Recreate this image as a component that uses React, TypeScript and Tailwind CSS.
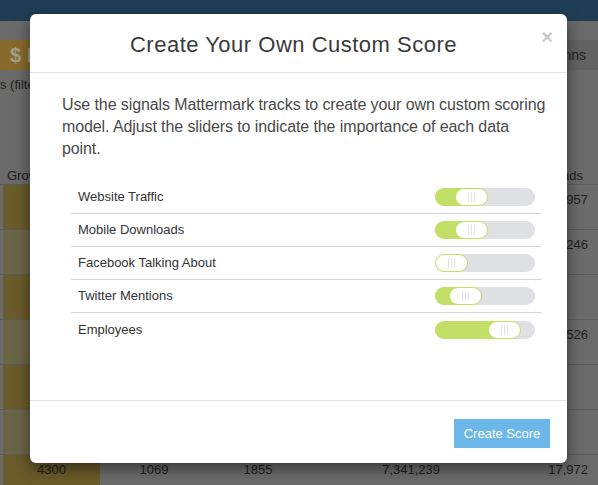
import React from 'react';

const SIGNALS = [
  { label: 'Website Traffic', pos: 20 },
  { label: 'Mobile Downloads', pos: 20 },
  { label: 'Facebook Talking About', pos: 0 },
  { label: 'Twitter Mentions', pos: 14 },
  { label: 'Employees', pos: 53 },
];

// background table rows (dimmed by the modal backdrop)
const ROWS = [
  { dark: true, right: '1,957' },
  { dark: false, right: '3,246' },
  { dark: true, right: '' },
  { dark: false, right: '1,526' },
  { dark: true, right: '' },
  { dark: false, right: '' },
];

function Slider({ pos }: { pos: number }) {
  return (
    <div className="relative w-[100px] h-[18px] rounded-full bg-[#dfe0e4]">
      {pos > 0 && (
        <div className="absolute left-0 top-0 h-full rounded-full bg-[#c2df67]" style={{ width: pos + 17 }} />
      )}
      <div
        className="absolute top-0 w-[33px] h-[18px] rounded-full bg-white border border-[#c2df67] flex items-center justify-center gap-[2px]"
        style={{ left: pos }}
      >
        <span className="w-px h-[10px] bg-[#e4e4e4]" />
        <span className="w-px h-[10px] bg-[#e4e4e4]" />
        <span className="w-px h-[10px] bg-[#e4e4e4]" />
      </div>
    </div>
  );
}

export default function App() {
  return (
    <div className="relative w-[598px] h-[485px] overflow-hidden bg-[#6b6b6b] font-['Liberation_Sans',Arial,sans-serif]">
      {/* Page behind the backdrop */}
      <div className="h-[21px] bg-[#1f3e56]" />
      <div className="h-[19px]" />
      <div className="flex h-[30px] justify-between">
        <div className="w-[200px] bg-[#876a2c] text-[#a5a08f] text-[20px] font-bold flex items-center pl-[10px]">
          $ Investors
        </div>
        <div className="bg-[#626262] text-[#1e1e1e] text-[14px] flex items-center pl-[14px] pr-[12px]">
          Columns
        </div>
      </div>
      <div className="h-[30px] flex items-center text-[13px] text-[#1e1e1e]">s (filtered)</div>
      <div className="h-[60px]" />
      <div className="h-[25px] flex items-start justify-between pt-[6px] pl-[7px] pr-[15px] text-[13px] text-[#1e1e1e] border-b border-[#5b5b5b]">
        <span>Growth</span>
        <span>Uploads</span>
      </div>
      {ROWS.map((r, i) => (
        <div key={i} className="flex h-[45px] border-b border-[#5b5b5b] text-[13px] text-[#1e1e1e]">
          <div className="w-[3px]" />
          <div className={`w-[97px] ${r.dark ? 'bg-[#6a5b2a]' : 'bg-[#6b6547]'}`} />
          <div className="flex-1" />
          <div className="w-[148px] pr-[10px] pt-[5px] text-right">{r.right}</div>
        </div>
      ))}
      <div className="flex h-[45px] text-[13px] text-[#1e1e1e]">
        <div className="w-[3px]" />
        <div className="w-[97px] bg-[#6a5b2a] text-center pt-[5px]">4300</div>
        <div className="w-[108px] text-center pt-[5px]">1069</div>
        <div className="w-[100px] text-center pt-[5px]">1855</div>
        <div className="w-[142px] text-right pr-[10px] pt-[5px]">7,341,239</div>
        <div className="flex-1 text-right pr-[10px] pt-[5px]">17,972</div>
      </div>

      {/* Modal */}
      <div className="absolute left-[30px] top-[14px] w-[537px] h-[449px] bg-white rounded-[6px] shadow-[0_5px_15px_rgba(0,0,0,0.5)] flex flex-col">
        <div className="relative h-[59px] flex items-center justify-center pr-[10px] border-b border-[#e2e2e2]">
          <h3 className="text-[22px] text-[#3a3a3a] font-light tracking-[0.5px] mt-[2px]">Create Your Own Custom Score</h3>
          <span className="absolute right-[14px] top-[13px] text-[20px] leading-none font-bold text-[#c9c9c9]">×</span>
        </div>

        <div className="flex-1 pt-[21px] pl-[32px] pr-[6px] border-b border-[#e2e2e2]">
          <p className="text-[16px] leading-[22px] text-[#4a4a4a] tracking-[-0.1px] whitespace-nowrap">
            Use the signals Mattermark tracks to create your own custom scoring
            <br />
            model. Adjust the sliders to indicate the importance of each data
            <br />
            point.
          </p>
          <div className="mt-[21px] ml-[9px] mr-[20px]">
            {SIGNALS.map((s, i) => (
              <div
                key={s.label}
                className={`h-[33px] flex items-center justify-between pl-[7px] pr-[6px] ${i < SIGNALS.length - 1 ? 'border-b border-[#d6d6d6]' : ''}`}
              >
                <span className="text-[13px] text-[#333]">{s.label}</span>
                <Slider pos={s.pos} />
              </div>
            ))}
          </div>
        </div>

        <div className="h-[62px] flex items-start justify-end pt-[18px] pr-[17px]">
          <button className="w-[96px] h-[29px] bg-[#6cb7e9] text-white text-[13px]">Create Score</button>
        </div>
      </div>
    </div>
  );
}
